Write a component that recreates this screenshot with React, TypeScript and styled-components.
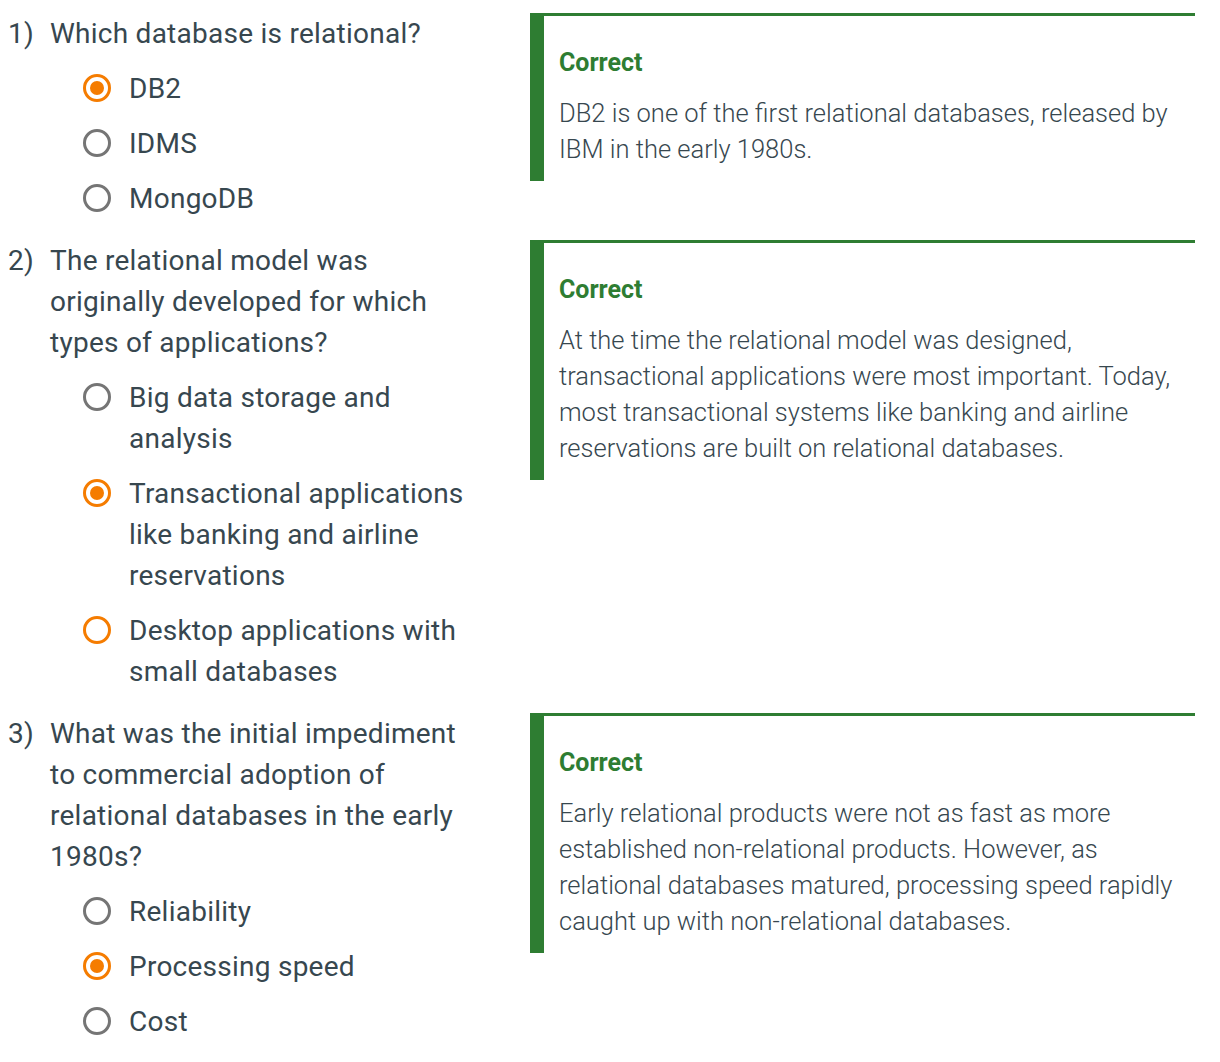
import React from "react";
import styled, { createGlobalStyle } from "styled-components";

const GlobalStyle = createGlobalStyle`
  html, body {
    margin: 0;
    padding: 0;
    background: #ffffff;
  }
  body {
    font-family: Roboto, "Noto Sans", "Liberation Sans", sans-serif;
    color: #37474f;
  }
`;

const Quiz = styled.div`
  display: flex;
  flex-direction: column;
  gap: 21px;
  padding: 13px 25px 0 8px;
`;

const Row = styled.section`
  display: grid;
  grid-template-columns: 472px 1fr;
  column-gap: 50px;
  align-items: start;
`;

const QuestionBlock = styled.div`
  display: flex;
  align-items: flex-start;
`;

const Number = styled.span`
  flex: 0 0 42px;
  font-size: 28px;
  line-height: 41px;
  font-weight: 400;
  letter-spacing: 0.25px;
`;

const QuestionBody = styled.div`
  flex: 1 1 auto;
  min-width: 0;
`;

const Prompt = styled.div`
  font-size: 28px;
  line-height: 41px;
  font-weight: 400;
  letter-spacing: 0.25px;
`;

const Options = styled.ul`
  list-style: none;
  margin: 0;
  padding: 0 0 0 33px;
  display: flex;
  flex-direction: column;
  gap: 14px;
  margin-top: 14px;
`;

const Option = styled.li`
  display: flex;
  align-items: flex-start;
  gap: 18px;
`;

const Radio = styled.span<{ $checked?: boolean; $active?: boolean }>`
  flex: 0 0 28px;
  width: 28px;
  height: 28px;
  margin-top: 6px;
  box-sizing: border-box;
  border-radius: 50%;
  border: 3px solid ${(p) => (p.$checked || p.$active ? "#f57c00" : "#757575")};
  display: flex;
  align-items: center;
  justify-content: center;
  &::after {
    content: "";
    width: 14px;
    height: 14px;
    border-radius: 50%;
    background: #f57c00;
    display: ${(p) => (p.$checked ? "block" : "none")};
  }
`;

const OptionLabel = styled.span`
  font-size: 28px;
  line-height: 41px;
  font-weight: 400;
  letter-spacing: 0.25px;
`;

const Feedback = styled.aside`
  border-top: 3px solid #2e7d32;
  border-left: 14px solid #2e7d32;
  padding: 29px 16px 14px 15px;
`;

const FeedbackTitle = styled.div`
  color: #2e7d32;
  font-size: 25px;
  line-height: 36px;
  font-weight: 700;
  margin-bottom: 14px;
`;

const FeedbackText = styled.p`
  margin: 0;
  font-size: 25.5px;
  line-height: 36px;
  font-weight: 300;
`;

type Q = {
  n: number;
  prompt: string;
  options: { label: string; checked?: boolean; active?: boolean }[];
  feedback: string;
};

const questions: Q[] = [
  {
    n: 1,
    prompt: "Which database is relational?",
    options: [{ label: "DB2", checked: true }, { label: "IDMS" }, { label: "MongoDB" }],
    feedback:
      "DB2 is one of the first relational databases, released by IBM in the early 1980s.",
  },
  {
    n: 2,
    prompt: "The relational model was originally developed for which types of applications?",
    options: [
      { label: "Big data storage and analysis" },
      { label: "Transactional applications like banking and airline reservations", checked: true },
      { label: "Desktop applications with small databases", active: true },
    ],
    feedback:
      "At the time the relational model was designed, transactional applications were most important. Today, most transactional systems like banking and airline reservations are built on relational databases.",
  },
  {
    n: 3,
    prompt:
      "What was the initial impediment to commercial adoption of relational databases in the early 1980s?",
    options: [
      { label: "Reliability" },
      { label: "Processing speed", checked: true },
      { label: "Cost" },
    ],
    feedback:
      "Early relational products were not as fast as more established non-relational products. However, as relational databases matured, processing speed rapidly caught up with non-relational databases.",
  },
];

export default function App() {
  return (
    <>
      <GlobalStyle />
      <Quiz>
        {questions.map((q) => (
          <Row key={q.n}>
            <QuestionBlock>
              <Number>{q.n})</Number>
              <QuestionBody>
                <Prompt>{q.prompt}</Prompt>
                <Options>
                  {q.options.map((o) => (
                    <Option key={o.label}>
                      <Radio $checked={o.checked} $active={o.active} />
                      <OptionLabel>{o.label}</OptionLabel>
                    </Option>
                  ))}
                </Options>
              </QuestionBody>
            </QuestionBlock>
            <Feedback>
              <FeedbackTitle>Correct</FeedbackTitle>
              <FeedbackText>{q.feedback}</FeedbackText>
            </Feedback>
          </Row>
        ))}
      </Quiz>
    </>
  );
}
